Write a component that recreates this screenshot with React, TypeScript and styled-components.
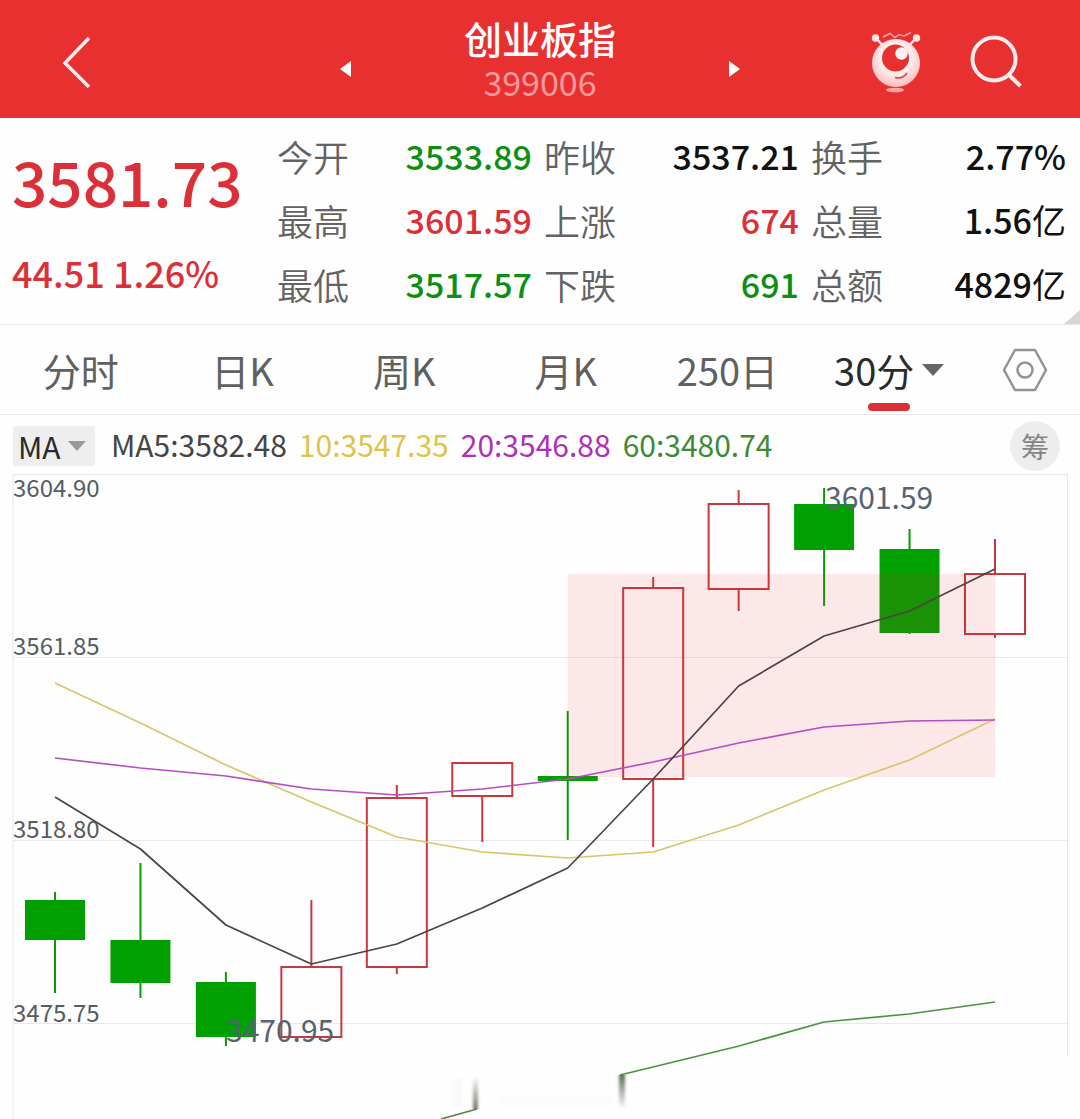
import React, { useState } from 'react';
import styled, { createGlobalStyle } from 'styled-components';

const GlobalStyle = createGlobalStyle`
  * { box-sizing: border-box; }
  body {
    margin: 0;
    background: #fefefe;
    font-family: "Noto Sans CJK SC", "Noto Sans", sans-serif;
    overflow-x: hidden;
  }
  button, select { font: inherit; color: inherit; }
`;

const colors = {
  brand: '#e93031',
  up: '#dc3038',
  down: '#0d8f14',
  fall: '#00a000',
  rise: '#c8383c',
  ink: '#111',
  label: '#636363',
  line: '#e8e8e8',
};

type Tone = 'up' | 'down' | 'ink';

const Page = styled.main`
  width: 100%;
  overflow: hidden;
`;

const Header = styled.header`
  display: grid;
  grid-template-columns: 1fr 400px 1fr;
  align-items: center;
  padding: 15px 50px;
  background: ${colors.brand};
  color: #fff;
`;

const IconButton = styled.button`
  display: flex;
  align-items: center;
  justify-content: center;
  padding: 0;
  border: 0;
  background: none;
  cursor: pointer;
`;

const BackButton = styled(IconButton)`
  justify-self: start;
`;

const Switcher = styled.div`
  display: flex;
  align-items: center;
  justify-content: space-between;
`;

const StepButton = styled(IconButton)`
  padding-top: 20px;
`;

const Heading = styled.div`
  text-align: center;
`;

const Title = styled.h1`
  margin: 0;
  font-size: 38px;
  line-height: 46px;
  font-weight: 500;
`;

const Code = styled.div`
  font-size: 34px;
  line-height: 42px;
  color: #f79a9a;
`;

const Actions = styled.div`
  display: flex;
  align-items: center;
  justify-content: flex-end;
  gap: 40px;
`;

const Quote = styled.section`
  position: relative;
  display: flex;
  padding: 6px 14px 8px 12px;
  border-bottom: 1px solid ${colors.line};
`;

const Latest = styled.div`
  flex: 0 0 265px;
  color: ${colors.up};
  white-space: nowrap;
`;

const Price = styled.div`
  font-size: 62px;
  line-height: 112px;
  font-weight: 500;
`;

const Change = styled.div`
  font-size: 36px;
  line-height: 72px;
  font-weight: 500;
`;

const Stats = styled.dl`
  flex: 1;
  display: grid;
  grid-template-columns: repeat(3, 1fr);
  column-gap: 12px;
  margin: 0;
`;

const Stat = styled.div`
  display: flex;
  justify-content: space-between;
  font-size: 36px;
  line-height: 64px;
  white-space: nowrap;
`;

const StatName = styled.dt`
  color: ${colors.label};
  font-weight: 350;
`;

const StatValue = styled.dd<{ $tone: Tone }>`
  margin: 0;
  font-size: 34px;
  font-weight: 500;
  color: ${(p) => colors[p.$tone]};
`;

const Unit = styled.span`
  font-weight: 400;
`;

const Corner = styled.svg`
  position: absolute;
  right: 0;
  bottom: 0;
`;

const Tabs = styled.nav`
  display: grid;
  grid-template-columns: repeat(6, 1fr) 110px;
  height: 90px;
  border-bottom: 1px solid ${colors.line};
`;

const Tab = styled.button<{ $active: boolean }>`
  position: relative;
  display: flex;
  align-items: center;
  justify-content: center;
  gap: 8px;
  padding: 0;
  border: 0;
  background: none;
  font-size: 38px;
  line-height: 56px;
  font-weight: 400;
  color: ${(p) => (p.$active ? '#2b2b2b' : '#606060')};
  white-space: nowrap;
  cursor: pointer;

  &::after {
    content: '';
    display: ${(p) => (p.$active ? 'block' : 'none')};
    position: absolute;
    bottom: 3px;
    left: 50%;
    width: 42px;
    height: 8px;
    margin-left: -21px;
    border-radius: 4px;
    background: ${colors.up};
  }
`;

const IndicatorBar = styled.div`
  display: flex;
  align-items: center;
  height: 59px;
  padding: 3px 20px 0 13px;
  font-size: 30px;
  line-height: 40px;
`;

const Picker = styled.label`
  position: relative;
  display: flex;
  align-items: center;

  svg {
    position: absolute;
    right: 9px;
    pointer-events: none;
  }
`;

const PickerSelect = styled.select`
  appearance: none;
  width: 82px;
  height: 40px;
  padding: 0 0 6px 5px;
  border: 0;
  border-radius: 2px;
  background: #eee;
  color: #2a2a2a;
`;

const Averages = styled.div`
  display: flex;
  flex: 1;
  gap: 12px;
  margin-left: 16px;
  padding-bottom: 4px;
  white-space: nowrap;
`;

const Average = styled.span<{ $color: string }>`
  color: ${(p) => p.$color};
`;

const ChipButton = styled.button`
  width: 50px;
  height: 50px;
  padding: 0;
  border: 0;
  border-radius: 50%;
  background: #ededed;
  color: #858585;
  font-size: 28px;
  line-height: 50px;
  cursor: pointer;
`;

const Chart = styled.svg`
  display: block;
  width: 100%;
  height: auto;
  overflow: visible;
  font-family: "Noto Sans CJK SC", "Noto Sans", sans-serif;
`;

const AxisText = styled.text`
  font-size: 24px;
  fill: #555c62;
`;

const MarkText = styled.text`
  font-size: 30px;
  fill: #566370;
`;

const stats: { name: string; value: string; unit?: string; tone: Tone }[] = [
  { name: '今开', value: '3533.89', tone: 'down' },
  { name: '昨收', value: '3537.21', tone: 'ink' },
  { name: '换手', value: '2.77%', tone: 'ink' },
  { name: '最高', value: '3601.59', tone: 'up' },
  { name: '上涨', value: '674', tone: 'up' },
  { name: '总量', value: '1.56', unit: '亿', tone: 'ink' },
  { name: '最低', value: '3517.57', tone: 'down' },
  { name: '下跌', value: '691', tone: 'down' },
  { name: '总额', value: '4829', unit: '亿', tone: 'ink' },
];

const tabs = ['分时', '日K', '周K', '月K', '250日', '30分'];

const averages = [
  { text: 'MA5:3582.48', color: '#444' },
  { text: '10:3547.35', color: '#dfc34c' },
  { text: '20:3546.88', color: '#b02fb8' },
  { text: '60:3480.74', color: '#3f8a35' },
];

// [rising, high, body top, body bottom, low] in plot units
const candles: [boolean, number, number, number, number][] = [
  [false, 418, 426, 466, 519],
  [false, 389, 466, 509, 524],
  [false, 498, 508, 563, 572],
  [true, 426, 493, 563, 563],
  [true, 311, 324, 493, 500],
  [true, 289, 289, 322, 368],
  [false, 237, 302, 307, 366],
  [true, 103, 114, 305, 373],
  [true, 16, 30, 115, 137],
  [false, 14, 30, 76, 132],
  [false, 55, 75, 159, 160],
  [true, 65, 100, 160, 164],
];

const series = [
  { color: '#d9c56a', ys: [209, 249, 291, 328, 363, 378, 384, 378, 351, 316, 286, 245] },
  { color: '#b64cc4', ys: [284, 294, 302, 315, 321, 315, 305, 288, 269, 253, 247, 246] },
  { color: '#4a4446', ys: [323, 375, 451, 490, 470, 434, 394, 305, 212, 162, 137, 95] },
];

const gridLines = [184, 367, 550];
const axisLabels: [string, number][] = [
  ['3604.90', 23],
  ['3561.85', 181],
  ['3518.80', 364],
  ['3475.75', 548],
];

const columnX = (i: number) => 55 + (i * 940) / 11;

const points = (ys: number[]) => ys.map((y, i) => `${columnX(i)},${y}`).join(' ');

function Mascot() {
  return (
    <svg width="60" height="68" viewBox="0 -4 60 68" fill="none" aria-hidden="true">
      <defs>
        <radialGradient id="mascotBody" cx="0.5" cy="0.4" r="0.6">
          <stop offset="0.5" stopColor="#fff0f0" />
          <stop offset="1" stopColor="#fbbcbc" />
        </radialGradient>
      </defs>
      <path d="M10 9 18 18M50 9 42 18" stroke="#fde0e0" strokeWidth="2.5" />
      <circle cx="9.5" cy="9" r="3.7" fill="#fde6e6" />
      <circle cx="50.5" cy="9" r="3.7" fill="#fde6e6" />
      <path d="M17 8 24 4.500 29 8.500 33 5.500 38 7 45 3.500" stroke="#f9a3a3" strokeWidth="1.5" />
      <circle cx="30" cy="34" r="24" fill="url(#mascotBody)" />
      <circle cx="29.5" cy="29" r="13.500" fill="#e93031" />
      <circle cx="35.5" cy="24.500" r="6.200" fill="#fff0f0" />
      <path d="M29 48.500Q36.500 50.500 41 44" stroke="#d8484c" strokeWidth="1.600" />
      <ellipse cx="29" cy="61" rx="9" ry="2.300" fill="#fba8a0" />
    </svg>
  );
}

function CandleChart() {
  return (
    <Chart viewBox="0 0 1080 645" role="img" aria-label="30分钟K线图">
      <defs>
        <linearGradient id="fadeUp" x1="0" y1="1" x2="0" y2="0">
          <stop offset="0" stopColor="#6d7a68" />
          <stop offset="1" stopColor="#6d7a68" stopOpacity="0" />
        </linearGradient>
        <linearGradient id="fadeDown" x1="0" y1="0" x2="0" y2="1">
          <stop offset="0" stopColor="#5d6a58" />
          <stop offset="1" stopColor="#5d6a58" stopOpacity="0" />
        </linearGradient>
        <filter id="smudge" x="-100%" width="300%" y="-10%" height="120%">
          <feGaussianBlur stdDeviation="1.500 0.500" />
        </filter>
      </defs>

      <g stroke={colors.line} strokeWidth="1" fill="none">
        <path d="M13 645V0.500H1067.500V582" />
        {gridLines.map((y) => (
          <line key={y} x1="13" x2="1067" y1={y - 0.5} y2={y - 0.5} />
        ))}
      </g>

      {candles.map(([rising, high, top, bottom, low], i) => {
        const x = columnX(i);
        const color = rising ? colors.rise : colors.fall;
        return (
          <g key={i} stroke={color} strokeWidth="2">
            <line x1={x} x2={x} y1={high} y2={top} />
            <line x1={x} x2={x} y1={bottom} y2={low} />
            {rising ? (
              <rect x={x - 30} y={top} width="60" height={bottom - top} fill="none" />
            ) : (
              <rect x={x - 30} y={top} width="60" height={bottom - top} fill={color} stroke="none" />
            )}
          </g>
        );
      })}

      <rect x={columnX(6)} y="100" width={columnX(11) - columnX(6)} height="203" fill="#f82830" fillOpacity="0.1" />

      <g fill="none" strokeWidth="1.700" strokeLinejoin="round">
        {series.map((s) => (
          <polyline key={s.color} points={points(s.ys)} stroke={s.color} />
        ))}
        <polyline points="441,645 477,635" stroke="#4f8a45" />
        <polyline points="620,601 653,593 739,572 824,548 909,540 995,528" stroke="#4a9440" />
      </g>

      <g filter="url(#smudge)">
        <rect x="453" y="604" width="10" height="30" fill="#fafafa" />
        <rect x="500" y="622" width="112" height="10" fill="#fbfcfb" />
        <rect x="473" y="602" width="5" height="33" fill="url(#fadeUp)" />
        <rect x="619" y="601" width="6" height="34" fill="url(#fadeDown)" />
      </g>

      {axisLabels.map(([text, y]) => (
        <AxisText key={text} x="13" y={y}>
          {text}
        </AxisText>
      ))}
      <MarkText x="825" y="35">3601.59</MarkText>
      <MarkText x="226" y="568">3470.95</MarkText>
    </Chart>
  );
}

export default function App() {
  const [active, setActive] = useState('30分');

  return (
    <Page>
      <GlobalStyle />
      <Header>
        <BackButton aria-label="返回">
          <svg width="54" height="60" viewBox="0 0 54 60" fill="none" aria-hidden="true">
            <path d="M39 9 15 34 39 58" stroke="#fdeaea" strokeWidth="3.500" />
          </svg>
        </BackButton>
        <Switcher>
          <StepButton aria-label="上一个">
            <svg width="12" height="16" viewBox="0 0 12 16" aria-hidden="true">
              <path d="M11 0V16L0 8Z" fill="#fff" />
            </svg>
          </StepButton>
          <Heading>
            <Title>创业板指</Title>
            <Code>399006</Code>
          </Heading>
          <StepButton aria-label="下一个">
            <svg width="12" height="16" viewBox="0 0 12 16" aria-hidden="true">
              <path d="M1 0V16L12 8Z" fill="#fff" />
            </svg>
          </StepButton>
        </Switcher>
        <Actions>
          <IconButton aria-label="助手">
            <Mascot />
          </IconButton>
          <IconButton aria-label="搜索">
            <svg width="64" height="64" viewBox="0 0 64 64" fill="none" stroke="#ffecec" strokeWidth="4" aria-hidden="true">
              <circle cx="28" cy="32" r="21.500" />
              <path d="M43 48 54.500 59" />
            </svg>
          </IconButton>
        </Actions>
      </Header>

      <Quote>
        <Latest>
          <Price>3581.73</Price>
          <Change>44.51 1.26%</Change>
        </Latest>
        <Stats>
          {stats.map((s) => (
            <Stat key={s.name}>
              <StatName>{s.name}</StatName>
              <StatValue $tone={s.tone}>
                {s.value}
                {s.unit && <Unit>{s.unit}</Unit>}
              </StatValue>
            </Stat>
          ))}
        </Stats>
        <Corner width="16" height="14" viewBox="0 0 16 14" aria-hidden="true">
          <path d="M16 0V14H0Z" fill="#d6d6d6" />
        </Corner>
      </Quote>

      <Tabs>
        {tabs.map((t) => (
          <Tab key={t} $active={t === active} onClick={() => setActive(t)}>
            {t}
            {t === '30分' && (
              <svg width="22" height="12" viewBox="0 0 22 12" aria-hidden="true">
                <path d="M0 0H22L11 12Z" fill="#666" />
              </svg>
            )}
          </Tab>
        ))}
        <IconButton aria-label="设置">
          <svg width="46" height="44" viewBox="0 0 46 44" fill="none" stroke="#929292" strokeWidth="2.500" aria-hidden="true">
            <path d="M13 2H33L44 22 33 42H13L2 22Z" strokeLinejoin="round" />
            <circle cx="23" cy="22" r="7.500" />
          </svg>
        </IconButton>
      </Tabs>

      <IndicatorBar>
        <Picker>
          <PickerSelect aria-label="指标" defaultValue="MA">
            <option>MA</option>
          </PickerSelect>
          <svg width="18" height="10" viewBox="0 0 18 10" aria-hidden="true">
            <path d="M0 0H18L9 10Z" fill="#999" />
          </svg>
        </Picker>
        <Averages>
          {averages.map((a) => (
            <Average key={a.text} $color={a.color}>
              {a.text}
            </Average>
          ))}
        </Averages>
        <ChipButton aria-label="筹码">筹</ChipButton>
      </IndicatorBar>

      <CandleChart />
    </Page>
  );
}
